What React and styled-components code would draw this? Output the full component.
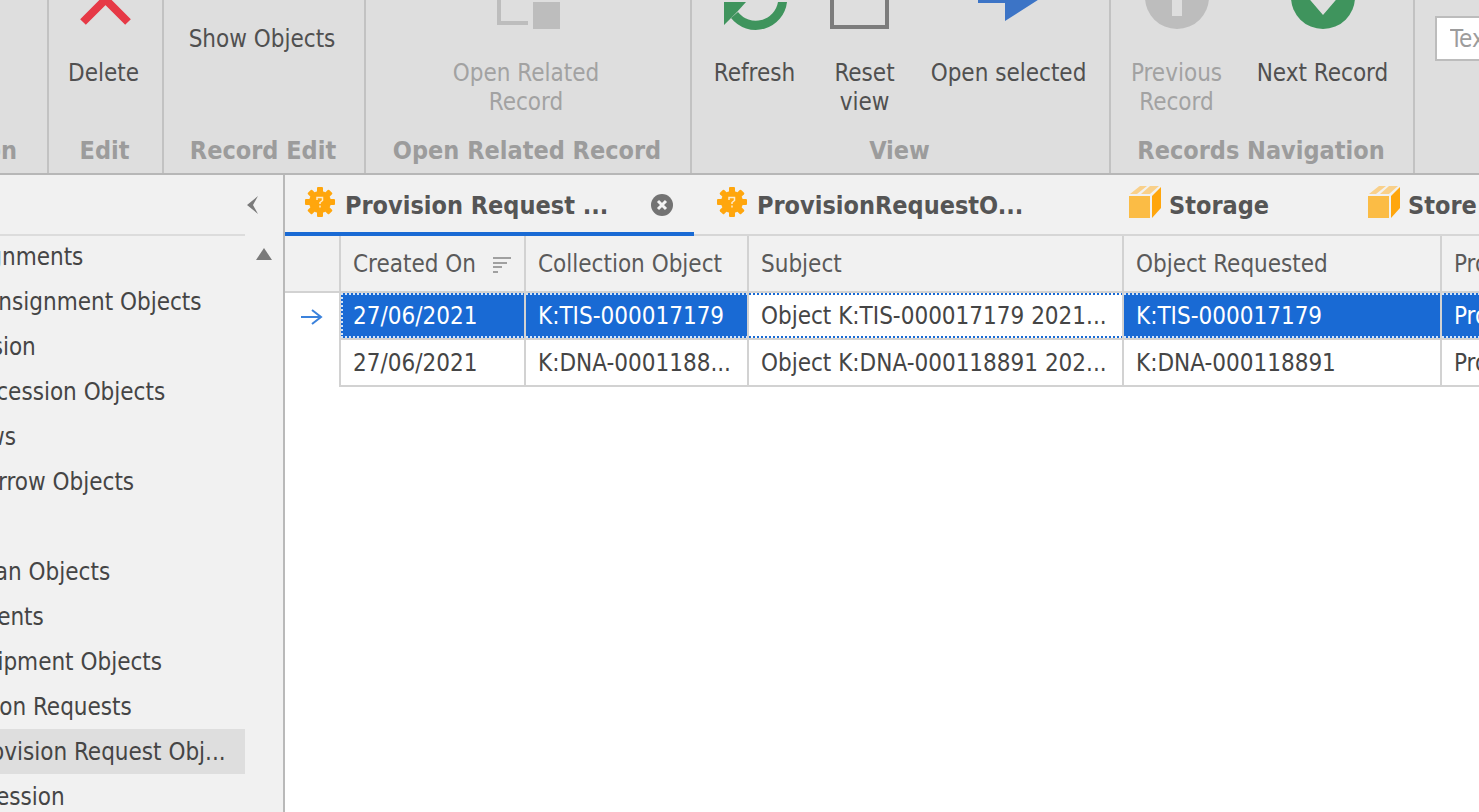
import React from "react";
import styled, { createGlobalStyle } from "styled-components";

const GlobalStyle = createGlobalStyle`
  *, *::before, *::after { box-sizing: border-box; }
  body {
    margin: 0;
    background: #fff;
    color: #454545;
    font-family: "DejaVu Sans Condensed", "DejaVu Sans", Tahoma, sans-serif;
    font-size: 24px;
    line-height: 29px;
  }
  button, input { font: inherit; color: inherit; }
`;

const Window = styled.div`
  display: flex;
  flex-direction: column;
  height: 100vh;
  overflow: hidden;
`;

/* ---------- ribbon ---------- */

const Ribbon = styled.header`
  flex: none;
  display: flex;
  height: 175px;
  overflow: hidden;
  background: #dedede;
  border-bottom: 2px solid #b7b7b7;
`;

const Group = styled.section`
  flex: ${(p) => (p.$width ? `0 0 ${p.$width}px` : "1 0 0")};
  display: flex;
  flex-direction: column;
  justify-content: flex-end;
  align-items: ${(p) => (p.$scrolled ? "flex-end" : "center")};
  min-width: 0;
  overflow: hidden;
  padding-right: ${(p) => (p.$scrolled ? 30 : 2)}px;
  border-right: ${(p) => (p.$last ? "0" : "2px solid #c2c2c2")};
`;

const GroupLabel = styled.h2`
  margin: 0;
  padding-bottom: 8px;
  color: #9c9c9c;
  font-size: 25px;
  font-weight: 700;
  line-height: 29px;
  white-space: nowrap;
`;

const Commands = styled.div`
  flex: none;
  display: flex;
  align-items: flex-start;
  justify-content: center;
  gap: ${(p) => p.$gap || 0}px;
  height: 164px;
  margin-bottom: 6px;
  padding-right: 2px;
`;

const Command = styled.button`
  display: flex;
  flex-direction: column;
  align-items: center;
  gap: 29px;
  width: ${(p) => p.$width}px;
  padding: 0;
  border: 0;
  background: none;
  color: #505050;
  line-height: 29px;
  white-space: nowrap;
  svg { flex: none; display: block; overflow: visible; }
  &:disabled { color: #a2a2a2; }
`;

const SmallCommand = styled(Command)`
  padding-top: 59px;
`;

const FindRow = styled.div`
  flex: none;
  display: flex;
  align-items: flex-start;
  align-self: flex-start;
  height: 191px;
  padding: 34px 0 0 20px;
`;

const FindBox = styled.input`
  flex: none;
  width: 240px;
  height: 45px;
  padding: 0 13px;
  border: 2px solid #bcbcbc;
  border-radius: 0;
  background: #fff;
  &::placeholder { color: #9c9c9c; opacity: 1; }
`;

/* ---------- body ---------- */

const Body = styled.div`
  flex: 1;
  display: flex;
  min-height: 0;
`;

const Sidebar = styled.aside`
  flex: 0 0 285px;
  display: flex;
  flex-direction: column;
  overflow: hidden;
  background: #f1f1f1;
  border-right: 2px solid #b9b9b9;
`;

const SidebarHead = styled.div`
  flex: none;
  display: flex;
  justify-content: flex-end;
  align-items: center;
  height: 59px;
  padding-right: 24px;
`;

const IconButton = styled.button`
  display: grid;
  place-items: center;
  padding: 0;
  border: 0;
  background: none;
  svg { display: block; }
`;

const NavFrame = styled.div`
  display: flex;
  align-items: flex-start;
`;

const NavList = styled.ul`
  flex: 0 0 245px;
  margin: 0;
  padding: 0;
  overflow: hidden;
  list-style: none;
  box-shadow: inset 0 2px #dcdcdc;
`;

const NavItem = styled.li`
  height: 45px;
  background: ${(p) => (p.$selected ? "#dedede" : "transparent")};
`;

const NavLink = styled.a`
  display: block;
  margin-left: ${(p) => (p.$level ? -30 : -71)}px;
  color: #454545;
  line-height: 47px;
  text-decoration: none;
  white-space: nowrap;
`;

const ScrollUp = styled(IconButton)`
  width: 38px;
  height: 40px;
`;

const Main = styled.main`
  flex: 1;
  display: flex;
  flex-direction: column;
  min-width: 0;
  overflow: hidden;
  background: #fff;
`;

const Tabs = styled.div`
  flex: none;
  display: flex;
  gap: 3px;
  height: 61px;
  background: #f1f1f1;
  box-shadow: inset 0 -2px #d6d6d6;
`;

const Tab = styled.div`
  flex: 0 0 ${(p) => p.$width}px;
  display: flex;
  align-items: center;
  padding: 3px 20px 0;
  border-bottom: 4px solid ${(p) => (p.$active ? "#196ad4" : "transparent")};
`;

const TabTitle = styled.button`
  flex: 1;
  display: flex;
  align-items: center;
  gap: 8px;
  padding: 0;
  border: 0;
  background: none;
  color: #555;
  font-size: 25px;
  font-weight: 700;
  line-height: 29px;
  white-space: nowrap;
  svg { flex: none; margin-bottom: 6px; }
`;

/* ---------- grid ---------- */

const Grid = styled.table`
  width: 1420px;
  table-layout: fixed;
  border-collapse: separate;
  border-spacing: 0;
`;

const HeadCell = styled.th`
  height: 57px;
  padding: 2px 12px 0;
  overflow: hidden;
  border: solid #d2d2d2;
  border-width: 0 2px 2px 0;
  background: #f1f1f1;
  color: #5a5a5a;
  font-weight: 400;
  text-align: left;
  white-space: nowrap;
`;

const HeadContent = styled.span`
  display: flex;
  justify-content: space-between;
  align-items: center;
`;

const Marker = styled.td`
  padding: 0;
  border-right: 2px solid #d2d2d2;
  svg { display: block; margin: 0 auto; }
`;

const dotLine = (angle, dot) => `repeating-linear-gradient(${angle}deg, ${dot} 0 2px, transparent 2px 4px)`;

const dots = (dot, fill, withLeft) => `
  background:
    ${dotLine(90, dot)} 0 0 / 100% 2px no-repeat,
    ${dotLine(90, dot)} 0 100% / 100% 2px no-repeat,
    ${withLeft ? `${dotLine(180, dot)} 0 0 / 2px 100% no-repeat,` : ""}
    ${fill};
  background-clip: padding-box;
`;

const Cell = styled.td`
  height: 47px;
  padding: 1px 12px 0;
  overflow: hidden;
  border: solid #d2d2d2;
  border-width: 0 2px 2px 0;
  white-space: nowrap;
  ${(p) => p.$state === "selected" && `color: #fff; ${dots("#d5e5f9", "#196ad4", p.$first)}`}
  ${(p) => p.$state === "focused" && dots("#196ad4", "#fff")}
`;

/* ---------- icons ---------- */

const DeleteIcon = () => (
  <svg width="64" height="64" viewBox="0 0 64 64" fill="none" stroke="#e63946" strokeWidth="8">
    <path d="M11 11 56 56M56 11 11 56" />
  </svg>
);

const RelatedIcon = () => (
  <svg width="64" height="64" viewBox="0 0 64 64" fill="#bdbdbd">
    <rect x="2" width="27" height="27" />
    <path d="M3 27H7V55H34V59H3z" />
    <rect x="39" y="36" width="27" height="27" />
  </svg>
);

const RefreshIcon = () => (
  <svg width="64" height="64" viewBox="0 0 64 64" fill="#3f945d">
    <path d="M64 36A31.500 31.500 0 0 1 8 52L15 46A22.500 22.500 0 0 0 55 36z" />
    <path d="M0 28A31.500 31.500 0 0 1 56 12L49 18A22.500 22.500 0 0 0 9 28z" />
    <path d="M1 36H23L14 46 8 52 1 59zM63 28H41L50 18 56 12 63 5z" />
  </svg>
);

const ResetIcon = () => (
  <svg width="64" height="64" viewBox="0 0 64 64">
    <path d="M-1 4H54V61H-1z" fill="none" stroke="#7c7c7c" strokeWidth="4" />
  </svg>
);

const OpenIcon = () => (
  <svg width="64" height="64" viewBox="0 0 64 64" fill="#3c74c6">
    <path d="M1 27H28V9L64 32 28 55V37H1z" />
  </svg>
);

const PreviousIcon = () => (
  <svg width="64" height="64" viewBox="0 0 64 64">
    <circle cx="32" cy="31" r="32" fill="#bdbdbd" />
    <path d="M27 50V28H15L32 11 49 28H37V50z" fill="#dedede" />
  </svg>
);

const NextIcon = () => (
  <svg width="64" height="64" viewBox="0 0 64 64">
    <circle cx="32" cy="31" r="32" fill="#3f945d" />
    <path d="M27 12V28H14L32 49 50 28H37V12z" fill="#dedede" />
  </svg>
);

const CollapseIcon = () => (
  <svg width="12" height="18" viewBox="0 0 12 18">
    <path d="M11 0 0 9 11 18 6 9z" fill="#7a7a7a" />
  </svg>
);

const UpIcon = () => (
  <svg width="16" height="12" viewBox="0 0 16 12">
    <path d="M8 0 16 12H0z" fill="#7a7a7a" />
  </svg>
);

const GearIcon = () => (
  <svg width="32" height="32" viewBox="0 0 32 32">
    <g fill="#ffa60d" transform="translate(15 16)">
      <circle r="11" />
      {[0, 45, 90, 135].map((a) => (
        <rect key={a} x="-3" y="-15" width="6" height="30" rx="1" transform={`rotate(${a})`} />
      ))}
    </g>
    <path d="M12 14V11.500H17.500V14.500L15 16.500V18M15 19.500V21.500" fill="none" stroke="#ffeccb" strokeWidth="1.500" />
  </svg>
);

const BoxIcon = () => (
  <svg width="32" height="32" viewBox="0 0 32 32">
    <path d="M0 10H21V32H0z" fill="#fbbc45" />
    <path d="M23 10 32 1V22L23 32z" fill="#ffa60d" />
    <path d="M1 8 11 0H18L8 8zM12 8 21 0H30L21 8z" fill="#f9d08a" />
  </svg>
);

const CloseIcon = () => (
  <svg width="23" height="23" viewBox="0 0 23 23">
    <circle cx="11" cy="11" r="11" fill="#737373" />
    <path d="M7 7 15 15M15 7 7 15" stroke="#f4f4f4" strokeWidth="3" />
  </svg>
);

const SortIcon = () => (
  <svg width="19" height="16" viewBox="0 0 19 16" fill="#a0a0a0">
    <path d="M0 0H18V2H0zM0 5H14V7H0zM0 9H9V11H0zM0 14H5V16H0z" />
  </svg>
);

const RowArrow = () => (
  <svg width="22" height="16" viewBox="0 0 22 16" fill="none" stroke="#3b82dc" strokeWidth="2">
    <path d="M0 8H20M11 1 20 8 11 15" />
  </svg>
);

/* ---------- data ---------- */

const navItems = [
  { text: "Consignments" },
  { text: "Consignment Objects", level: 1 },
  { text: "Accession" },
  { text: "Accession Objects", level: 1 },
  { text: "Borrows" },
  { text: "Borrow Objects", level: 1 },
  { text: "Loans" },
  { text: "Loan Objects", level: 1 },
  { text: "Shipments" },
  { text: "Shipment Objects", level: 1 },
  { text: "Provision Requests" },
  { text: "Provision Request Obj...", level: 1, selected: true },
  { text: "Deaccession" },
];

const tabs = [
  { text: "Provision Request ...", icon: GearIcon, width: 409, active: true },
  { text: "ProvisionRequestO...", icon: GearIcon, width: 409 },
  { text: "Storage", icon: BoxIcon, width: 236 },
  { text: "Store", icon: BoxIcon, width: 236 },
];

const columns = ["Created On", "Collection Object", "Subject", "Object Requested", "Provision Request"];
const widths = [56, 185, 223, 375, 318];

const rows = [
  ["27/06/2021", "K:TIS-000017179", "Object K:TIS-000017179 2021...", "K:TIS-000017179", "Provision Request"],
  ["27/06/2021", "K:DNA-0001188...", "Object K:DNA-000118891 202...", "K:DNA-000118891", "Provision Request"],
];

const cellState = (row, col) => (row !== 0 ? undefined : col === 2 ? "focused" : "selected");

export default function App() {
  return (
    <Window>
      <GlobalStyle />
      <Ribbon>
        <Group $width={49} $scrolled>
          <GroupLabel>Selection</GroupLabel>
        </Group>
        <Group $width={115}>
          <Commands>
            <Command $width={108}><DeleteIcon />Delete</Command>
          </Commands>
          <GroupLabel>Edit</GroupLabel>
        </Group>
        <Group $width={202}>
          <Commands>
            <SmallCommand $width={190}>Show Objects</SmallCommand>
          </Commands>
          <GroupLabel>Record Edit</GroupLabel>
        </Group>
        <Group $width={326}>
          <Commands>
            <Command $width={190} disabled><RelatedIcon /><span>Open Related<br />Record</span></Command>
          </Commands>
          <GroupLabel>Open Related Record</GroupLabel>
        </Group>
        <Group $width={419}>
          <Commands $gap={33}>
            <Command $width={88}><RefreshIcon />Refresh</Command>
            <Command $width={66}><ResetIcon /><span>Reset<br />view</span></Command>
            <Command $width={156}><OpenIcon />Open selected</Command>
          </Commands>
          <GroupLabel>View</GroupLabel>
        </Group>
        <Group $width={304}>
          <Commands $gap={31}>
            <Command $width={94} disabled><PreviousIcon /><span>Previous<br />Record</span></Command>
            <Command $width={136}><NextIcon />Next Record</Command>
          </Commands>
          <GroupLabel>Records Navigation</GroupLabel>
        </Group>
        <Group $last>
          <FindRow>
            <FindBox type="text" placeholder="Text to search..." aria-label="Text to search" />
          </FindRow>
        </Group>
      </Ribbon>

      <Body>
        <Sidebar>
          <SidebarHead>
            <IconButton aria-label="Collapse"><CollapseIcon /></IconButton>
          </SidebarHead>
          <NavFrame>
            <NavList>
              {navItems.map((n) => (
                <NavItem key={n.text} $selected={n.selected}>
                  <NavLink href="#" $level={n.level}>{n.text}</NavLink>
                </NavItem>
              ))}
            </NavList>
            <ScrollUp aria-label="Scroll up"><UpIcon /></ScrollUp>
          </NavFrame>
        </Sidebar>

        <Main>
          <Tabs>
            {tabs.map(({ text, icon: Icon, width, active }) => (
              <Tab key={text} $width={width} $active={active}>
                <TabTitle><Icon />{text}</TabTitle>
                {active && <IconButton aria-label="Close tab"><CloseIcon /></IconButton>}
              </Tab>
            ))}
          </Tabs>
          <Grid>
            <colgroup>
              {widths.map((w) => <col key={w} width={w} />)}
              <col />
            </colgroup>
            <thead>
              <tr>
                <HeadCell aria-label="Current row" />
                {columns.map((c, i) => (
                  <HeadCell key={c} scope="col">
                    <HeadContent>{c}{i === 0 && <SortIcon />}</HeadContent>
                  </HeadCell>
                ))}
              </tr>
            </thead>
            <tbody>
              {rows.map((r, i) => (
                <tr key={r[1]}>
                  <Marker>{i === 0 && <RowArrow />}</Marker>
                  {r.map((v, j) => (
                    <Cell key={j} $state={cellState(i, j)} $first={j === 0}>{v}</Cell>
                  ))}
                </tr>
              ))}
            </tbody>
          </Grid>
        </Main>
      </Body>
    </Window>
  );
}
